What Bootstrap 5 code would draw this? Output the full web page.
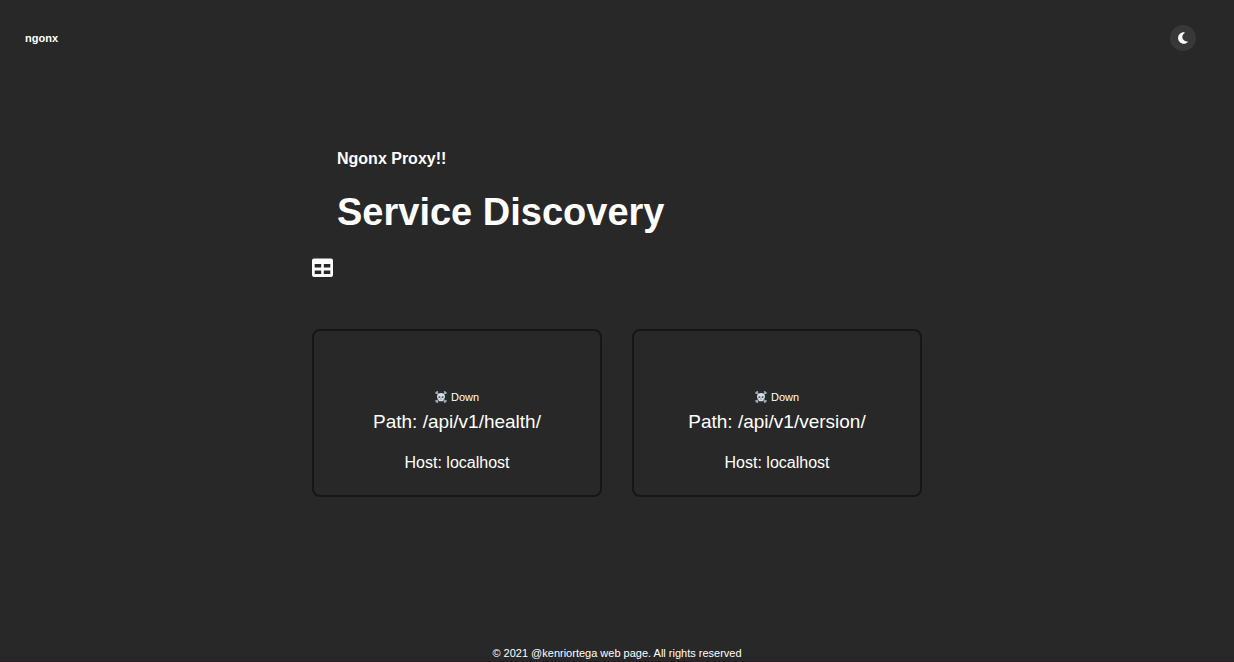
<!DOCTYPE html>
<html lang="en">
<head>
<meta charset="utf-8">
<meta name="viewport" content="width=device-width, initial-scale=1">
<title>ngonx</title>
<link href="https://cdn.jsdelivr.net/npm/bootstrap@5.3.0/dist/css/bootstrap.min.css" rel="stylesheet">
<style>
  body { background: #282828; color: #fff; font: 11px/16px "Liberation Sans", Arial, sans-serif; border-bottom: 1px solid #2c1a24; }
  .topbar { padding: 25px 38px 24px 25px; }
  .brand { font-size: 11px; line-height: 16px; color: #fff; }
  .theme-btn { width: 26px; height: 26px; background: #383838; color: #fff; }
  .content { max-width: 610px; padding-top: 72px; }
  .intro { padding-left: 25px; }
  .kicker { font-size: 16px; line-height: 24px; margin-bottom: 19px; }
  .headline { font-size: 38px; line-height: 44px; margin-bottom: 24px; }
  .services { gap: 30px; margin-top: 52px; }
  .service { background: transparent; color: #fff; border: 2px solid #161616; border-radius: 8px; padding: 58px 16px 20px; }
  .path { font-size: 19px; line-height: 24px; margin: 5px 0 17px; }
  .host { font-size: 16px; line-height: 24px; }
</style>
</head>
<body class="min-vh-100 d-flex flex-column">
<header class="topbar d-flex justify-content-between align-items-center">
  <a class="brand fw-bold text-decoration-none" href="#">ngonx</a>
  <button class="theme-btn btn rounded-circle border-0 p-0 d-flex align-items-center justify-content-center" type="button" aria-label="Toggle theme">
    <svg width="12" height="12" viewBox="0 0 12 12" fill="currentColor" aria-hidden="true"><path d="M6.800.2C3.600.2 1.100 2.800 1.100 6s2.500 5.800 5.700 5.800c1.600 0 3-.7 4-1.800.2-.3 0-.6-.4-.6C7.700 9.800 5.300 7.800 5.300 5.100c0-1.700.9-3.200 2.400-4 .3-.2.200-.6-.1-.7z"/></svg>
  </button>
</header>
<main class="content container-fluid px-0 flex-grow-1">
  <div class="intro">
    <h2 class="kicker fw-bold">Ngonx Proxy!!</h2>
    <h1 class="headline fw-bold">Service Discovery</h1>
  </div>
  <button class="btn border-0 p-0 d-block text-white lh-1" type="button" aria-label="Table view">
    <svg class="d-block" width="21" height="19" viewBox="0 0 21 19" fill="currentColor" aria-hidden="true"><path fill-rule="evenodd" d="M2 .5h17a2 2 0 0 1 2 2V17a2 2 0 0 1-2 2H2a2 2 0 0 1-2-2V2.500a2 2 0 0 1 2-2zM2.700 6v3.500h6.500V6zm9.100 0v3.500h6.500V6zm-9.100 6.500V16h6.500v-3.500zm9.100 0V16h6.500v-3.500z"/></svg>
  </button>
  <div class="services d-flex flex-column flex-sm-row">
    <section class="service card flex-fill w-100 text-center">
      <div class="d-flex justify-content-center align-items-center gap-1">
        <svg width="12" height="12" viewBox="0 0 24 24" aria-hidden="true"><path d="M3 3l18 18M21 3L3 21" stroke="#8497a2" stroke-width="3"/><g fill="#9fb0ba"><circle cx="2.500" cy="4" r="2.200"/><circle cx="4.500" cy="2" r="2"/><circle cx="21.500" cy="4" r="2.200"/><circle cx="19.500" cy="2" r="2"/><circle cx="2.500" cy="20" r="2.200"/><circle cx="4.500" cy="22" r="2"/><circle cx="21.500" cy="20" r="2.200"/><circle cx="19.500" cy="22" r="2"/></g><path fill="#d3dee6" d="M12 4c-5 0-8 3-8 7.500 0 3 1.500 4.500 3.500 5.500v3.500h9V17c2-1 3.500-2.500 3.500-5.500C20 7 17 4 12 4z"/><path fill="#4c5a63" d="M7 10.500h3.500v3.500H7zM13.500 10.500H17v3.500h-3.500zM11 15h2v2h-2z"/></svg>
        <span>Down</span>
      </div>
      <p class="path">Path: /api/v1/health/</p>
      <p class="host mb-0">Host: localhost</p>
    </section>
    <section class="service card flex-fill w-100 text-center">
      <div class="d-flex justify-content-center align-items-center gap-1">
        <svg width="12" height="12" viewBox="0 0 24 24" aria-hidden="true"><path d="M3 3l18 18M21 3L3 21" stroke="#8497a2" stroke-width="3"/><g fill="#9fb0ba"><circle cx="2.500" cy="4" r="2.200"/><circle cx="4.500" cy="2" r="2"/><circle cx="21.500" cy="4" r="2.200"/><circle cx="19.500" cy="2" r="2"/><circle cx="2.500" cy="20" r="2.200"/><circle cx="4.500" cy="22" r="2"/><circle cx="21.500" cy="20" r="2.200"/><circle cx="19.500" cy="22" r="2"/></g><path fill="#d3dee6" d="M12 4c-5 0-8 3-8 7.500 0 3 1.500 4.500 3.500 5.500v3.500h9V17c2-1 3.500-2.500 3.500-5.500C20 7 17 4 12 4z"/><path fill="#4c5a63" d="M7 10.500h3.500v3.500H7zM13.500 10.500H17v3.500h-3.500zM11 15h2v2h-2z"/></svg>
        <span>Down</span>
      </div>
      <p class="path">Path: /api/v1/version/</p>
      <p class="host mb-0">Host: localhost</p>
    </section>
  </div>
</main>
<footer class="text-center">© 2021 @kenriortega web page. All rights reserved</footer>
<script src="https://cdn.jsdelivr.net/npm/bootstrap@5.3.0/dist/js/bootstrap.bundle.min.js"></script>
</body>
</html>
